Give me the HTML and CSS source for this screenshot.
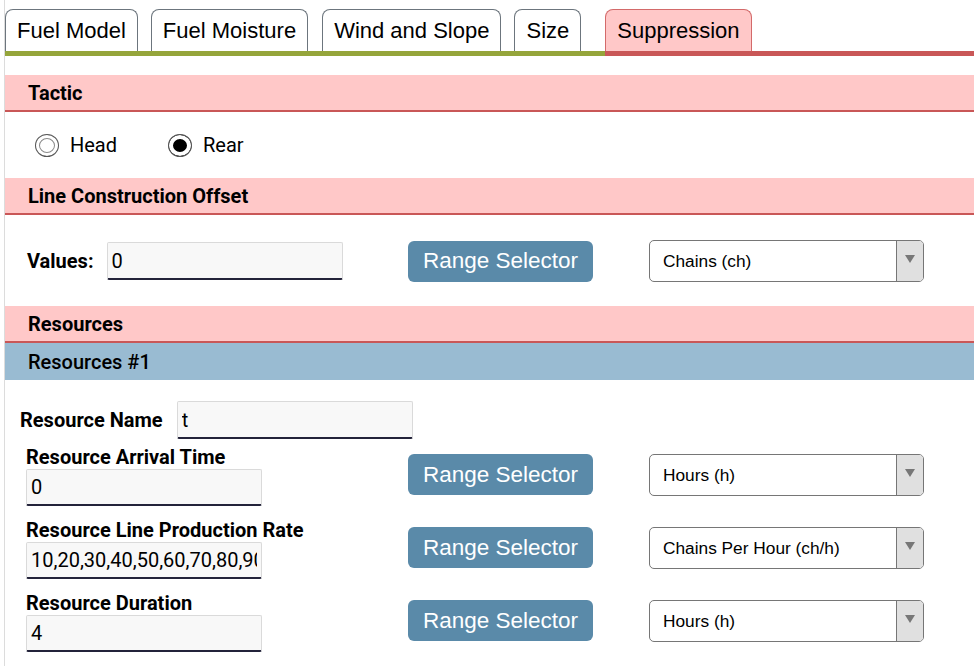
FILE: index.html
```html
<!DOCTYPE html>
<html>
<head>
<meta charset="utf-8">
<link rel="stylesheet" href="styles.css">
</head>
<body>
<div class="page">
  <nav class="tabs">
    <div class="slot"><span class="tab">Fuel Model</span></div>
    <div class="slot slot-g14"><span class="tab">Fuel Moisture</span></div>
    <div class="slot"><span class="tab">Wind and Slope</span></div>
    <div class="slot slot-g24"><span class="tab">Size</span></div>
    <div class="slot slot-active"><span class="tab tab-active">Suppression</span></div>
  </nav>

  <h2 class="sect first">Tactic</h2>
  <div class="radios">
    <label class="radio"><input type="radio" name="tactic"> Head</label>
    <label class="radio"><input type="radio" name="tactic" checked> Rear</label>
  </div>

  <h2 class="sect">Line Construction Offset</h2>
  <div class="row row-values">
    <div class="inline">
      <span class="lbl">Values:</span>
      <input class="field" type="text" value="0">
    </div>
    <button class="range">Range Selector</button>
    <div class="select"><span class="sel-text">Chains (ch)</span><span class="sel-arrow"></span></div>
  </div>

  <h2 class="sect">Resources</h2>
  <h3 class="sub">Resources #1</h3>

  <div class="name-row">
    <span class="lbl">Resource Name</span>
    <input class="field" type="text" value="t">
  </div>

  <div class="row row-res">
    <div class="stack">
      <span class="lbl">Resource Arrival Time</span>
      <input class="field" type="text" value="0">
    </div>
    <button class="range">Range Selector</button>
    <div class="select"><span class="sel-text">Hours (h)</span><span class="sel-arrow"></span></div>
  </div>

  <div class="row row-res">
    <div class="stack">
      <span class="lbl">Resource Line Production Rate</span>
      <input class="field" type="text" value="10,20,30,40,50,60,70,80,90,100">
    </div>
    <button class="range">Range Selector</button>
    <div class="select"><span class="sel-text">Chains Per Hour (ch/h)</span><span class="sel-arrow"></span></div>
  </div>

  <div class="row row-res">
    <div class="stack">
      <span class="lbl">Resource Duration</span>
      <input class="field" type="text" value="4">
    </div>
    <button class="range">Range Selector</button>
    <div class="select"><span class="sel-text">Hours (h)</span><span class="sel-arrow"></span></div>
  </div>
</div>
</body>
</html>
```

FILE: styles.css
```css
* { box-sizing: border-box; }
html, body { margin: 0; padding: 0; background: #fff; }
body {
  font-family: Roboto, "Liberation Sans", sans-serif;
  color: #000;
  overflow: hidden;
  height: 666px;
}
.page {
  margin-left: 4px;
  border-left: 1px solid #dcdcdc;
  min-height: 666px;
}

/* Tabs */
.tabs {
  display: flex;
  padding-top: 9px;
}
.slot {
  border-bottom: 5px solid #95a53b;
  padding-right: 13px;
  display: flex;
}
.slot-g14 { padding-right: 14px; }
.slot-g24 { padding-right: 24px; }
.slot-active {
  flex: 1;
  border-bottom-color: #c95757;
  padding-right: 0;
}
.tab {
  display: block;
  height: 42px;
  padding: 0 11px;
  border: 1px solid #6c757d;
  border-bottom: none;
  border-radius: 8px 8px 0 0;
  font-family: "Liberation Sans", Arial, sans-serif;
  font-size: 22px;
  line-height: 41px;
  color: #000;
  background: #fff;
}
.tab-active {
  background: #ffc8c8;
  border-color: #d36a6a;
}

/* Section headers */
.sect {
  margin: 0;
  height: 37px;
  padding: 1px 0 0 23px;
  background: #ffc8c8;
  border-bottom: 2px solid #c95757;
  font-size: 20px;
  font-weight: 700;
  line-height: 34px;
}
.sect.first { margin-top: 19px; }
.sub {
  margin: 0;
  height: 37px;
  padding-left: 23px;
  background: #99bbd2;
  font-size: 20px;
  font-weight: 500;
  line-height: 39px;
}

/* Radios */
.radios {
  display: flex;
  gap: 51px;
  padding: 21px 0 0 30px;
  height: 66px;
}
.radio {
  display: flex;
  align-items: center;
  gap: 11px;
  font-size: 20px;
  height: 24px;
}
.radio input {
  appearance: none;
  -webkit-appearance: none;
  margin: 0;
  width: 24px;
  height: 23px;
  border: 1px solid #555;
  border-radius: 50%;
  background: #fff;
  box-shadow: inset 0 0 0 3px #fff, inset 0 0 0 4px #8a8a8a;
}
.radio input:checked {
  background: #000;
  box-shadow: inset 0 0 0 4px #fff;
}

/* Rows */
.row {
  display: grid;
  grid-template-columns: 382px 241px 275px;
  align-items: center;
  padding-left: 21px;
}
.row-values {
  height: 91px;
  padding-top: 1px;
}
.inline {
  display: flex;
  align-items: center;
  gap: 13px;
  padding-left: 1px;
}
.lbl {
  font-size: 20px;
  font-weight: 700;
  white-space: nowrap;
}
.field {
  width: 236px;
  height: 38px;
  margin: 0;
  padding: 0 4px;
  background: #f8f8f8;
  border: 1px solid #dadada;
  border-bottom: 2px solid #23233a;
  border-radius: 2px;
  font-family: Roboto, "Liberation Sans", sans-serif;
  font-size: 20px;
  color: #000;
  outline: none;
}
.range {
  width: 185px;
  height: 41px;
  margin: 0;
  padding: 0;
  border: none;
  border-radius: 6px;
  background: #5a8aa9;
  color: #fff;
  font-family: "Liberation Sans", Arial, sans-serif;
  font-size: 22.5px;
  cursor: pointer;
}
.select {
  display: flex;
  width: 275px;
  height: 42px;
  border: 1px solid #767676;
  border-radius: 5px;
  overflow: hidden;
  background: #fff;
}
.sel-text {
  flex: 1;
  padding-left: 13px;
  font-family: "Liberation Sans", Arial, sans-serif;
  font-size: 17.3px;
  line-height: 40px;
}
.sel-arrow {
  width: 27px;
  background: #e0e0e0;
  border-left: 1px solid #767676;
  position: relative;
}
.sel-arrow::after {
  content: "";
  position: absolute;
  left: 8px;
  top: 14px;
  border-left: 5px solid transparent;
  border-right: 5px solid transparent;
  border-top: 8px solid #777;
}

.name-row {
  display: flex;
  align-items: center;
  gap: 14px;
  padding: 21px 0 0 15px;
}
.row-res {
  align-items: start;
}
.row-res .field { height: 37px; }
.row-res .range, .row-res .select { margin-top: 9px; }
.name-row + .row-res { margin-top: 6px; }
.row-res + .row-res { margin-top: 12px; }
.stack {
  display: flex;
  flex-direction: column;
}
.stack .lbl { line-height: 24px; }
```
